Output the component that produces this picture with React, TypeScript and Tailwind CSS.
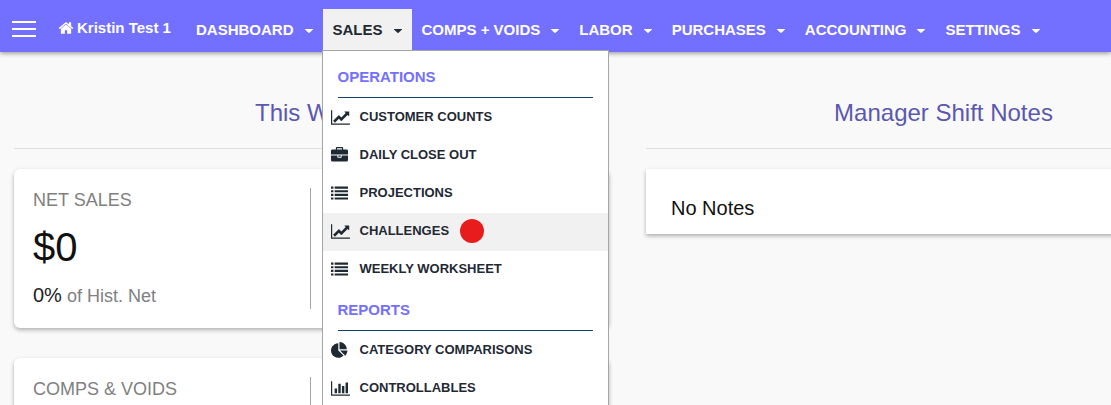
import React from 'react';

const ICONS = {
  home: {
    viewBox: '0 0 1792 1792',
    d: 'M1472 992v480q0 26-19 45t-45 19h-384v-384h-256v384h-384q-26 0-45-19t-19-45v-480q0-1 .5-3t.5-3l575-474 575 474q1 2 1 6zm223-69l-62 74q-8 9-21 11h-3q-13 0-21-7l-692-577-692 577q-12 8-24 7-13-2-21-11l-62-74q-8-10-7-23.5t11-21.5l719-599q32-26 76-26t76 26l244 204v-195q0-14 9-23t23-9h192q14 0 23 9t9 23v408l219 182q10 8 11 21.5t-7 23.5z',
  },
  line: {
    viewBox: '0 0 2048 1792',
    d: 'M2048 1536v128h-2048v-1536h128v1408h1920zm-128-1248v435q0 21-19.5 29.5t-35.5-7.5l-121-121-633 633q-10 10-23 10t-23-10l-233-233-416 416-192-192 585-585q10-10 23-10t23 10l233 233 464-464-121-121q-16-16-7.5-35.5t29.5-19.5h435q14 0 23 9t9 23z',
  },
  briefcase: {
    viewBox: '0 0 1792 1792',
    d: 'M640 256h512v-128h-512v128zm1152 640v480q0 66-47 113t-113 47h-1472q-66 0-113-47t-47-113v-480h672v160q0 26 19 45t45 19h320q26 0 45-19t19-45v-160h672zm-768 0v128h-256v-128h256zm768-480v384h-1792v-384q0-66 47-113t113-47h352v-160q0-40 28-68t68-28h576q40 0 68 28t28 68v160h352q66 0 113 47t47 113z',
  },
  list: {
    viewBox: '0 0 1792 1792',
    d: 'M0 160h256v224H0zM384 160h1408v224H384zM0 544h256v224H0zM384 544h1408v224H384zM0 928h256v224H0zM384 928h1408v224H384zM0 1312h256v224H0zM384 1312h1408v224H384z',
  },
  pie: {
    viewBox: '0 0 1792 1792',
    d: 'M768 890l546 546q-106 108-247.5 168t-298.5 60q-209 0-385.5-103t-279.5-279.5-103-385.5 103-385.5 279.5-279.5 385.5-103v762zm187 6h773q0 157-60 298.5t-168 247.5zm709-128h-768v-768q209 0 385.5 103t279.5 279.5 103 385.5z',
  },
  bar: {
    viewBox: '0 0 2048 1792',
    d: 'M640 896v512h-256v-512h256zm384-512v1024h-256v-1024h256zm1024 1152v128h-2048v-1536h128v1408h1920zm-640-896v768h-256v-768h256zm384-384v1152h-256v-1152h256z',
  },
};

type IconName = keyof typeof ICONS;

const navItems = ['DASHBOARD', 'SALES', 'COMPS + VOIDS', 'LABOR', 'PURCHASES', 'ACCOUNTING', 'SETTINGS'];

const salesMenu: { title: string; items: { label: string; icon: IconName; active?: boolean }[] }[] = [
  {
    title: 'OPERATIONS',
    items: [
      { label: 'CUSTOMER COUNTS', icon: 'line' },
      { label: 'DAILY CLOSE OUT', icon: 'briefcase' },
      { label: 'PROJECTIONS', icon: 'list' },
      { label: 'CHALLENGES', icon: 'line', active: true },
      { label: 'WEEKLY WORKSHEET', icon: 'list' },
    ],
  },
  {
    title: 'REPORTS',
    items: [
      { label: 'CATEGORY COMPARISONS', icon: 'pie' },
      { label: 'CONTROLLABLES', icon: 'bar' },
    ],
  },
];

export default function App() {
  return (
    <div className="h-screen overflow-hidden bg-[#f9f9f9] font-['Liberation_Sans',Arial,sans-serif] text-[#111]">
      <header className="relative z-10 flex h-[52px] items-start bg-[#736fff] text-[15px] font-bold text-white shadow-[0_1px_5px_rgba(0,0,0,0.45)]">
        <button aria-label="Open menu" className="ml-3 mt-[21px] flex w-6 flex-col gap-[5px]">
          <span className="h-0.5 w-full bg-white" />
          <span className="h-0.5 w-full bg-white" />
          <span className="h-0.5 w-full bg-white" />
        </button>
        <a href="#" className="ml-[22px] mt-[18px] flex w-32 shrink-0 items-center gap-[3px] whitespace-nowrap leading-5">
          <Icon name="home" className="h-4 w-4" />
          Kristin Test 1
        </a>
        <nav>
          <ul className="mt-[9px] flex">
            {navItems.map((label) => (
              <li key={label} className="relative">
                <NavButton label={label} open={label === 'SALES'} />
                {label === 'SALES' && <SalesMenu />}
              </li>
            ))}
          </ul>
        </nav>
      </header>

      {/* Dashboard columns */}
      <main className="grid min-w-[1241px] grid-cols-2 gap-[37px] pl-[14px]">
        <section>
          <SectionTitle>This Week</SectionTitle>
          <div className="mt-5 flex flex-col gap-[30px]">
            <StatCard title="NET SALES">
              <p className="my-[15px] text-[40px] leading-10">$0</p>
              <p className="text-lg leading-[26px] text-[#808080]">
                <span className="text-xl leading-[26px] text-[#222]">0%</span> of Hist. Net
              </p>
            </StatCard>
            <StatCard title="COMPS & VOIDS" />
          </div>
        </section>
        <section>
          <SectionTitle>Manager Shift Notes</SectionTitle>
          <div className="mt-5 bg-white pb-3 pl-[25px] pt-[25px] text-xl leading-7 shadow-[0_2px_4px_rgba(0,0,0,0.3)]">
            No Notes
          </div>
        </section>
      </main>
    </div>
  );
}

function Icon({ name, className }: { name: IconName; className: string }) {
  return (
    <svg viewBox={ICONS[name].viewBox} className={className} fill="currentColor" aria-hidden="true">
      <path d={ICONS[name].d} />
    </svg>
  );
}

function NavButton({ label, open }: { label: string; open: boolean }) {
  return (
    <button
      aria-expanded={open}
      className={`flex h-[42px] items-center gap-[11px] whitespace-nowrap px-[10px] ${open ? 'bg-[#f1f1f1] text-[#1f2933]' : ''}`}
    >
      {label}
      <svg viewBox="0 0 8 4" className="mt-0.5 h-1 w-2" fill="currentColor" aria-hidden="true">
        <path d="M.5 0h7q.8.1.3.8L4.5 3.8q-.5.4-1 0L.2.8Q-.3.1.5 0z" />
      </svg>
    </button>
  );
}

function SalesMenu() {
  return (
    <div className="absolute -left-px top-[41px] w-[287px] border border-[#a5a5a5] bg-white pt-[5px] text-[#1f2933]">
      {salesMenu.map((group) => (
        <div key={group.title}>
          <h3 className="mx-[15px] flex h-[42px] items-center border-b border-[#12406f] pt-0.5 text-[15px] text-[#736fff]">
            {group.title}
          </h3>
          <ul className="pt-px">
            {group.items.map((item) => (
              <li key={item.label}>
                <a
                  href="#"
                  className={`flex h-[38px] items-center pb-0.5 pl-2 text-[13px] ${item.active ? 'bg-[#f1f1f1]' : ''}`}
                >
                  <span className="w-[29px]">
                    <Icon name={item.icon} className="h-[17px] w-auto" />
                  </span>
                  {item.label}
                  {item.active && <span className="ml-[11px] h-6 w-6 rounded-full bg-[#e81c1c]" />}
                </a>
              </li>
            ))}
          </ul>
        </div>
      ))}
    </div>
  );
}

function SectionTitle({ children }: { children: React.ReactNode }) {
  return (
    <h2 className="border-b border-[#dedede] pb-[17px] pt-[43px] text-center text-2xl leading-9 text-[#5b58b0]">
      {children}
    </h2>
  );
}

function StatCard({ title, children }: { title: string; children?: React.ReactNode }) {
  return (
    <div className="grid min-h-[158px] grid-cols-2 rounded-md bg-white py-[19px] pl-[19px] pr-[21px] shadow-[0_2px_4px_rgba(0,0,0,0.3)]">
      <div className="border-r border-[#a5a5a5]">
        <h3 className="text-lg leading-6 text-[#808080]">{title}</h3>
        {children}
      </div>
    </div>
  );
}
